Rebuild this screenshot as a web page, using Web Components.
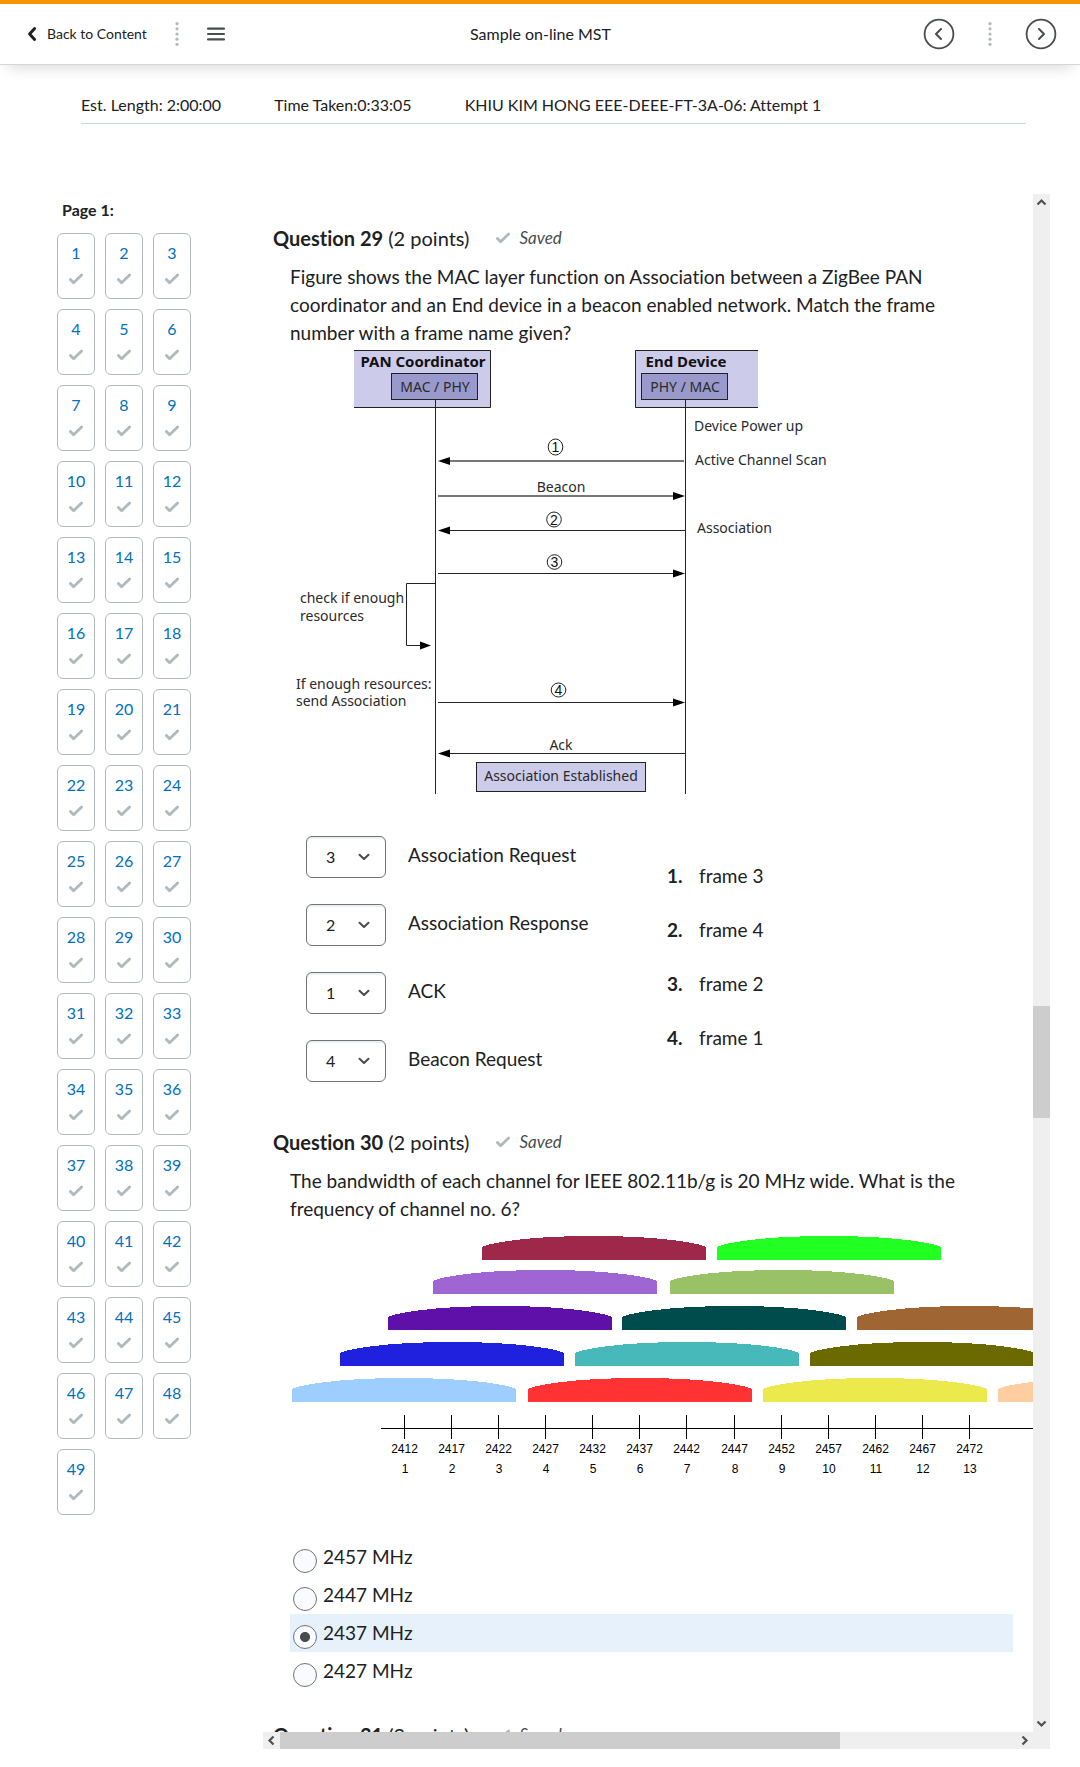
<!DOCTYPE html>
<html lang="en">
<head>
<meta charset="utf-8">
<title>Sample on-line MST</title>
<style>
  body { margin: 0; background: #fff; color: #202122; font: 16px/24px Lato, "Liberation Sans", sans-serif; font-variant-ligatures: none; }
</style>
</head>
<body>
<quiz-app></quiz-app>

<script>
const define = (name, render) => customElements.define(name, class extends HTMLElement {
  connectedCallback() {
    if (this.shadowRoot) return;
    this.attachShadow({ mode: 'open' }).innerHTML = render(this);
  }
});

/* ---------- small parts ---------- */

define('check-mark', () => `
  <style>:host{display:block;width:16px;height:12px} svg{display:block}</style>
  <svg width="16" height="12" viewBox="0 0 16 12" aria-hidden="true">
    <path d="M2.4 6.6 5.6 9.8 13.6 2" fill="none" stroke="#b1b9be" stroke-width="2.8" stroke-linecap="round" stroke-linejoin="round"/>
  </svg>`);

define('dot-divider', () => `
  <style>:host{display:block;width:4px;height:24px} svg{display:block}</style>
  <svg width="4" height="24" viewBox="0 0 4 24" fill="#b1b9be" aria-hidden="true">
    <circle cx="2" cy="1.7" r="1.6"/><circle cx="2" cy="6.8" r="1.6"/><circle cx="2" cy="12" r="1.6"/><circle cx="2" cy="17.2" r="1.6"/><circle cx="2" cy="22.3" r="1.6"/>
  </svg>`);

define('round-button', el => `
  <style>
    :host{display:block}
    button{display:block;width:32px;height:32px;padding:0;border:0;background:none}
    svg{display:block}
  </style>
  <button type="button" aria-label="${el.getAttribute('label')}">
    <svg width="32" height="32" viewBox="0 0 32 32" fill="none" stroke="#494c4e" stroke-width="1.8">
      <circle cx="16" cy="16" r="14.4"/>
      <path d="${el.getAttribute('dir') === 'prev' ? 'M18 11 13 16 18 21' : 'M14 11 19 16 14 21'}" stroke-width="2" stroke-linecap="round" stroke-linejoin="round"/>
    </svg>
  </button>`);

/* ---------- header ---------- */

define('quiz-header', () => `
  <style>
    :host{display:block;border-top:4px solid #f79400;border-bottom:1px solid #d3d7da;box-shadow:0 10px 14px -8px rgba(0,0,0,.16)}
    header{display:grid;grid-template-columns:1fr auto 1fr;align-items:center;height:60px;padding:0 23px 0 24px}
    .left,.right{display:flex;align-items:center}
    .right{justify-content:flex-end;gap:33px}
    .left{gap:28px}
    a{display:flex;align-items:center;gap:8px;color:#202122;text-decoration:none;font-size:14px}
    h1{margin:0;font-size:16px;font-weight:400}
    .menu{display:block;padding:0;border:0;background:none}
    svg{display:block}
  </style>
  <header>
    <div class="left">
      <a href="#content">
        <svg width="15" height="16" viewBox="0 0 15 16" aria-hidden="true"><path d="M10.6 2.6 5.6 8 10.6 13.4" fill="none" stroke="#202122" stroke-width="3" stroke-linecap="round" stroke-linejoin="round"/></svg>
        Back to Content</a>
      <dot-divider></dot-divider>
      <button class="menu" type="button" aria-label="Menu">
        <svg width="18" height="14" viewBox="0 0 18 14" fill="#494c4e"><rect y="0.6" width="18" height="2.1" rx="1"/><rect y="6" width="18" height="2.1" rx="1"/><rect y="11.3" width="18" height="2.1" rx="1"/></svg>
      </button>
    </div>
    <h1>Sample on-line MST</h1>
    <div class="right">
      <round-button dir="prev" label="Previous"></round-button>
      <dot-divider></dot-divider>
      <round-button dir="next" label="Next"></round-button>
    </div>
  </header>`);

define('attempt-info', () => `
  <style>
    :host{display:flex;gap:53px;margin:0 54px 0 81px;padding:28px 0 6px;border-bottom:1px solid #cdd5dc}
  </style>
  <span>Est. Length: 2:00:00</span><span>Time Taken:0:33:05</span><span>KHIU KIM HONG EEE-DEEE-FT-3A-06: Attempt 1</span>`);

/* ---------- question navigator ---------- */

define('question-tile', el => `
  <style>
    :host{display:block}
    a{box-sizing:border-box;display:flex;flex-direction:column;align-items:center;gap:8px;height:66px;padding-top:7px;
      border:1px solid #b1b9be;border-radius:6px;color:#006fbf;text-decoration:none}
  </style>
  <a href="#q${el.getAttribute('n')}">${el.getAttribute('n')}<check-mark></check-mark></a>`);

define('question-nav', () => `
  <style>
    :host{display:block}
    h2{margin:4px 0 11px;padding-left:5px;font-size:16px;line-height:24px;font-weight:700}
    nav{display:grid;grid-template-columns:repeat(3,38px);gap:10px}
  </style>
  <h2>Page 1:</h2>
  <nav>${Array.from({ length: 49 }, (_, i) => `<question-tile n="${i + 1}"></question-tile>`).join('')}</nav>`);

/* ---------- scroll panel ---------- */

const arrow = d => `<svg width="17" height="17" viewBox="0 0 17 17" aria-hidden="true"><path d="${d}" fill="none" stroke="#505050" stroke-width="2.2"/></svg>`;

define('scroll-panel', () => `
  <style>
    :host{display:grid;grid-template:minmax(0,1fr) 17px / minmax(0,1fr) 17px;min-height:0;background:#efefef}
    .view{overflow:hidden;background:#fff}
    .v,.h{display:flex}
    .v{flex-direction:column}
    .thumb{background:#cdcdcd}
    svg{display:block;flex:none}
  </style>
  <div class="view"><slot></slot></div>
  <div class="v">${arrow('M4.5 10.5 8.5 6.5 12.5 10.5')}<div style="flex:795"></div><div class="thumb" style="flex:112"></div><div style="flex:597"></div>${arrow('M4.5 6.5 8.5 10.5 12.5 6.5')}</div>
  <div class="h">${arrow('M10.5 4.5 6.5 8.5 10.5 12.5')}<div class="thumb" style="flex:560"></div><div style="flex:176"></div>${arrow('M6.5 4.5 10.5 8.5 6.5 12.5')}</div>`);

define('quiz-question', el => `
  <style>
    :host{display:block;padding:0 20px 31px 10px;font-size:19px;line-height:28px}
    header{display:flex;align-items:center;margin-bottom:11px}
    h2{margin:0 26px 0 0;font-size:20px;font-weight:400}
    i{margin-left:8px;font-size:17px;color:#494c4e}
    .body{padding-left:17px}
  </style>
  <header><h2><b>Question ${el.getAttribute('number')}</b> (2 points)</h2><check-mark></check-mark><i>Saved</i></header>
  <div class="body"><slot></slot></div>`);

/* ---------- matching ---------- */

define('match-row', el => `
  <style>
    :host{display:block}
    label{display:flex;align-items:center;gap:22px}
    .box{display:grid;align-items:center}
    select,svg{grid-area:1/1}
    select{appearance:none;width:80px;height:42px;padding:0 0 2px 19px;border:1px solid #6e7376;border-radius:6px;background:#fff;
      box-shadow:inset 0 2px 0 #eef1f4;color:#202122;font:16px Lato,sans-serif}
    svg{justify-self:end;margin-right:16px;pointer-events:none}
    .text{padding-bottom:4px}
  </style>
  <label><span class="box"><select>${[1, 2, 3, 4].map(n => `<option${n == el.getAttribute('value') ? ' selected' : ''}>${n}</option>`).join('')}</select>
    <svg width="12" height="8" viewBox="0 0 12 8" aria-hidden="true"><path d="M1.5 1.8 6 6 10.5 1.8" fill="none" stroke="#494c4e" stroke-width="2" stroke-linecap="round" stroke-linejoin="round"/></svg></span>
    <span class="text"><slot></slot></span></label>`);

define('match-question', () => `
  <style>
    :host{display:flex;padding:0 0 15px 16px}
    .left{display:grid;gap:26px;flex:0 0 361px}
    ol{list-style:none;margin:26px 0 0;padding:0;display:flex;flex-direction:column;gap:26px}
    li{display:flex}
    b{width:32px}
  </style>
  <div class="left">
    <match-row value="3">Association Request</match-row>
    <match-row value="2">Association Response</match-row>
    <match-row value="1">ACK</match-row>
    <match-row value="4">Beacon Request</match-row>
  </div>
  <ol>${[3, 4, 2, 1].map((f, i) => `<li><b>${i + 1}.</b>frame ${f}</li>`).join('')}</ol>`);

/* ---------- radio option ---------- */

define('radio-option', el => `
  <style>
    :host{display:block}
    :host([checked]){background:#e6f1fc}
    label{display:flex;align-items:center;gap:6px;height:38px;padding-left:3px}
    input{appearance:none;box-sizing:border-box;width:24px;height:24px;margin:8px 0 0;border:1px solid #6e7376;border-radius:50%;background:#f9fbff}
    input:checked{background:radial-gradient(circle,#494c4e 4.6px,#f9fbff 5.4px)}
  </style>
  <label><input type="radio" name="frequency"${el.hasAttribute('checked') ? ' checked' : ''}><slot></slot></label>`);

/* ---------- MAC association sequence diagram ---------- */

const head = (x, y, dir, len = 12) => `<path d="M${x} ${y}l${-dir * len}-4v8z" fill="#000"/>`;
const step = (x, y, ry, n) => `<ellipse cx="${x}" cy="${y}" rx="7.3" ry="${ry}" fill="none" stroke="#222"/><text class="n" x="${x}" y="${y + 5}">${n}</text>`;

define('sequence-diagram', () => `
  <style>
    :host{display:block;margin-bottom:37px}
    svg{display:block}
    text{font:14px "Noto Sans",sans-serif;fill:#2a2a2a}
    .b{font-weight:700;font-size:15px;fill:#111}
    .m{text-anchor:middle}
    .n{font:14px "Liberation Sans",sans-serif;text-anchor:middle;fill:#111}
    .l{stroke:#222;fill:none}
    .g{stroke:#777;stroke-width:2;fill:none}
  </style>
  <svg width="550" height="452" viewBox="290 347 550 452">
    <rect x="354" y="350" width="137" height="58" fill="#cccbe9"/>
    <path class="l" d="M354 350.5H490.5V407.5H354"/>
    <rect x="391.500" y="373.500" width="86" height="26" fill="#9999cc" stroke="#222"/>
    <rect x="635" y="350" width="123" height="58" fill="#cccbe9"/>
    <path class="l" d="M758 350.5H635.5V407.5H758"/>
    <rect x="641.500" y="373.500" width="86" height="26" fill="#9999cc" stroke="#222"/>
    <path class="l" d="M435.500 400V794M685.500 400V794"/>
    <text class="b m" x="423" y="367">PAN Coordinator</text>
    <text class="b m" x="686" y="367">End Device</text>
    <text class="m" x="435" y="392">MAC / PHY</text>
    <text class="m" x="685" y="392">PHY / MAC</text>
    <text x="694" y="431">Device Power up</text>
    <text x="695" y="465">Active Channel Scan</text>
    <text x="697" y="533">Association</text>
    <path class="g" d="M446 461H684M438 496H674"/>
    <path class="l" d="M446 530.500H685M438 573.500H674M438 702.500H674M446 753.500H685M435 583.500H406.500V645.500H422"/>
    ${head(438, 461, -1)}${head(685, 496, 1)}${head(438, 530.5, -1)}${head(685, 573.5, 1)}${head(431, 645.5, 1, 11)}${head(685, 702.5, 1)}${head(438, 753.5, -1)}
    ${step(555.5, 447, 8, 1)}${step(554, 519.5, 7.5, 2)}${step(554.5, 562, 7.3, 3)}${step(558.5, 690, 7, 4)}
    <text class="m" x="561" y="492">Beacon</text>
    <text class="m" x="561" y="750">Ack</text>
    <text x="300" y="603">check if enough</text><text x="300" y="621">resources</text>
    <text x="296" y="689">If enough resources:</text><text x="296" y="706">send Association</text>
    <rect x="476.500" y="762.500" width="169" height="29" fill="#cccbe9" stroke="#222"/>
    <text class="m" x="561" y="781">Association Established</text>
  </svg>`);

/* ---------- Wi-Fi channel chart ---------- */

const domes = [
  [1236, [482, '#9e284a'], [717, '#22ff22']],
  [1270, [433, '#9f66d3'], [670, '#99c165']],
  [1306, [388, '#5f10a8'], [622, '#004c4c'], [857, '#9f6633']],
  [1342, [340, '#2020df'], [575, '#48b9bb'], [810, '#6a6a00']],
  [1378, [292, '#9dceff'], [528, '#ff3333'], [763, '#ece94c'], [998, '#ffcea0']]
];
const dome = (x, y, fill) => `<path fill="${fill}" d="M${x} ${y + 24}V${y + 11}C${x + 4} ${y + 8} ${x + 40} ${y} ${x + 112} ${y}S${x + 220} ${y + 8} ${x + 224} ${y + 11}V${y + 24}Z"/>`;
const ticks = [404, 451, 498, 545, 592, 639, 686, 734, 781, 828, 875, 922, 969];

define('channel-chart', () => `
  <style>
    :host{display:block;margin-bottom:48px}
    svg{display:block}
    text{font:12px "Liberation Sans",sans-serif;text-anchor:middle;fill:#000}
  </style>
  <svg width="940" height="267" viewBox="290 1223 940 267" shape-rendering="crispEdges">
    ${domes.map(([y, ...row]) => row.map(([x, c]) => dome(x, y, c)).join('')).join('')}
    <rect x="381" y="1428" width="849" height="1"/>
    ${ticks.map((x, i) => `<rect x="${x}" y="1415" width="1" height="24"/><text x="${x + 0.5}" y="1453">${2412 + 5 * i}</text><text x="${x + 1}" y="1473">${i + 1}</text>`).join('')}
  </svg>`);

/* ---------- page ---------- */

define('quiz-app', () => `
  <style>
    :host{display:flex;flex-direction:column;height:100vh}
    main{flex:1;min-height:0;display:grid;grid-template-columns:206px minmax(0,1fr);padding:70px 30px 18px 57px}
    p{margin:0;padding-right:40px}
    .pad{padding-top:30px}
  </style>
  <quiz-header></quiz-header>
  <attempt-info></attempt-info>
  <main>
    <question-nav></question-nav>
    <scroll-panel>
      <div class="pad">
        <quiz-question number="29">
          <p>Figure shows the MAC layer function on Association between a ZigBee PAN coordinator and an End device in a beacon enabled network. Match the frame number with a frame name given?</p>
          <sequence-diagram></sequence-diagram>
          <match-question></match-question>
        </quiz-question>
        <quiz-question number="30">
          <p>The bandwidth of each channel for IEEE 802.11b/g is 20 MHz wide. What is the frequency of channel no. 6?</p>
          <channel-chart></channel-chart>
          <radio-option>2457 MHz</radio-option>
          <radio-option>2447 MHz</radio-option>
          <radio-option checked>2437 MHz</radio-option>
          <radio-option>2427 MHz</radio-option>
        </quiz-question>
        <quiz-question number="31"></quiz-question>
      </div>
    </scroll-panel>
  </main>`);
</script>
</body>
</html>
